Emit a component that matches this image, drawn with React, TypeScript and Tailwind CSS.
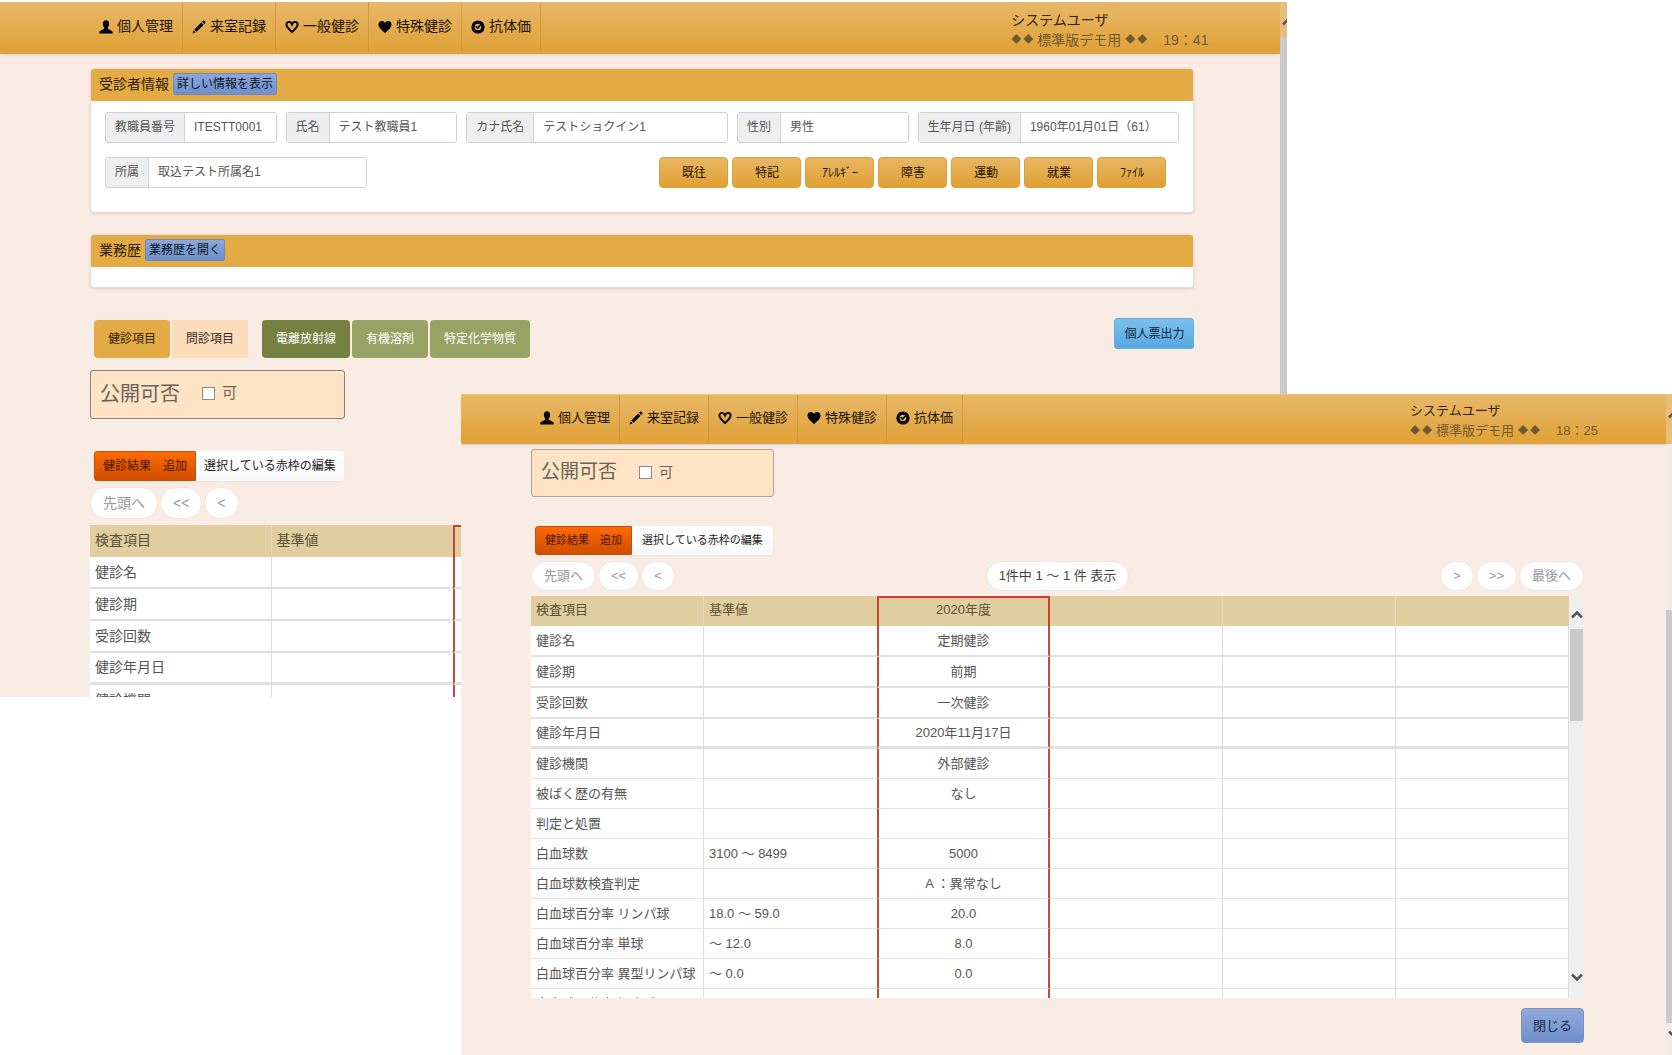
import React from "react";

type Size = "lg" | "md";

const ICONS = {
  user: (
    <path d="M7 .3c2 0 3.100 1.500 3.100 3.500 0 1.500-.5 2.900-1.200 3.700-.3.400-.2 1.300.3 1.600l3.800 1.900c.5.300.7.700.7 1.200v1.300H.3v-1.300c0-.5.2-.9.7-1.200l3.800-1.900c.5-.3.6-1.200.3-1.600C4.400 6.700 3.900 5.300 3.900 3.800 3.900 1.800 5 .3 7 .3z" />
  ),
  pencil: (
    <path d="M11 .8c.4-.4.9-.4 1.300 0l1 1c.4.400.4.900 0 1.300l-1 1-2.300-2.300zM9.300 2.500l2.300 2.300-7 7-2.300-2.300zM1.700 10.200l2.100 2.100L.6 13.400z" />
  ),
  heartEmpty: (
    <path
      d="M7 12C4.500 9.800 1.400 7.300 1.400 4.600 1.400 2.900 2.600 1.900 4 1.900c1.400 0 2.400.9 3 2.500.6-1.600 1.600-2.500 3-2.500 1.400 0 2.600 1 2.600 2.700 0 2.700-3.100 5.200-5.600 7.400z"
      fill="none"
      stroke="currentColor"
      strokeWidth="1.900"
    />
  ),
  heart: (
    <path d="M7 13.200C4 10.500.5 7.800.5 4.600.5 2.400 2 1 3.900 1 5.300 1 6.400 1.800 7 3.200 7.600 1.800 8.700 1 10.100 1 12 1 13.500 2.400 13.500 4.600 13.500 7.800 10 10.500 7 13.200z" />
  ),
  ok: (
    <>
      <circle cx="7" cy="7" r="6.600" />
      <circle cx="7" cy="7" r="3.300" className="fill-[#e4ae4f]" />
      <path d="M4.800 6.300l1.700 1.700L10 4.500" fill="none" stroke="currentColor" strokeWidth="1.600" />
    </>
  ),
};

const NAV: { icon: keyof typeof ICONS; label: string }[] = [
  { icon: "user", label: "個人管理" },
  { icon: "pencil", label: "来室記録" },
  { icon: "heartEmpty", label: "一般健診" },
  { icon: "heart", label: "特殊健診" },
  { icon: "ok", label: "抗体価" },
];

function Diamonds() {
  return (
    <span className="inline-flex gap-0.5 text-[10px]">
      <span>◆</span>
      <span>◆</span>
    </span>
  );
}

function NavBar({ size, time }: { size: Size; time: string }) {
  const lg = size === "lg";
  return (
    <header
      className={`flex shrink-0 items-stretch justify-between border-b border-[#dba548] bg-linear-to-b from-[#e7b867] to-[#e0a033] shadow-sm ${
        lg ? "h-[52px] pr-[72px] pl-[90px] text-[14px]" : "h-[50px] border-t border-t-[#ecc95c] pr-[68px] pl-[70px] text-[13px]"
      }`}
    >
      <nav className="flex">
        {NAV.map((n) => (
          <a
            key={n.label}
            href="#"
            className="flex items-center gap-1 border-r border-[#cf9a3f] px-[9px] pb-0.5 whitespace-nowrap text-[#1c1304]"
          >
            <svg viewBox="0 0 14 14" className="size-3.5 fill-current text-black" aria-hidden="true">
              {ICONS[n.icon]}
            </svg>
            {n.label}
          </a>
        ))}
      </nav>
      <div className="flex flex-col justify-center pt-1 leading-5 whitespace-nowrap">
        <p className="text-[#33240a]">システムユーザ</p>
        <p className="flex gap-4 text-[#6f5a30]">
          <span className="flex items-center gap-1">
            <Diamonds />
            標準版デモ用
            <Diamonds />
          </span>
          <span>{time}</span>
        </p>
      </div>
    </header>
  );
}

function Field({ id, label, value, span }: { id: string; label: string; value: string; span: string }) {
  return (
    <div className={`flex h-[31px] overflow-hidden rounded-[3px] border border-[#cfcfd4] text-[12px] text-[#555] ${span}`}>
      <label htmlFor={id} className="flex shrink-0 items-center border-r border-[#d4d4d4] bg-[#eeeeee] px-[9px] pb-px whitespace-nowrap">
        {label}
      </label>
      <input id={id} readOnly defaultValue={value} className="w-full min-w-0 bg-white px-[9px] pb-px outline-none" />
    </div>
  );
}

function Card({ title, action, children }: { title: string; action: string; children: React.ReactNode }) {
  return (
    <section className="overflow-hidden rounded border border-[#e6dcd6] bg-white shadow-sm">
      <div className="flex h-8 items-center gap-1 bg-[#e4ab45] px-2 pb-0.5 text-[14px] text-[#2d2008]">
        <h2>{title}</h2>
        <button className="h-[22px] rounded-[2px] border border-[#7088b8] bg-linear-to-b from-[#8ba6da] to-[#6e90cd] px-[3px] text-[12px] leading-none text-[#0c1424]">
          {action}
        </button>
      </div>
      {children}
    </section>
  );
}

function PublishBox({ size }: { size: Size }) {
  const lg = size === "lg";
  return (
    <div
      className={`flex items-center gap-[22px] rounded-[3px] border bg-[#fee4c5] pb-0.5 pl-[9px] text-[#6b6157] ${
        lg ? "h-[49px] w-[255px] border-[#8b8078]" : "h-[48px] w-[243px] border-[#b3a296]"
      }`}
    >
      <span className={lg ? "text-[20px]" : "text-[19px]"}>公開可否</span>
      <label className={`flex items-center gap-[7px] ${lg ? "text-[15px]" : "text-[14px]"}`}>
        <input type="checkbox" className="size-[13px] appearance-none border border-[#8a8a8a] bg-white checked:bg-[#6b6157]" />
        可
      </label>
    </div>
  );
}

function EditButtons({ size }: { size: Size }) {
  const lg = size === "lg";
  return (
    <div className={`flex whitespace-nowrap ${lg ? "ml-1 h-[30px] text-[12px]" : "ml-1 h-[29px] text-[11px]"}`}>
      <button
        className={`rounded-l-[3px] border border-[#c4500c] bg-linear-to-b from-[#fd6a03] to-[#cf4d00] text-[#4a1500] ${
          lg ? "px-2" : "px-[9px]"
        }`}
      >
        健診結果　追加
      </button>
      <button
        className={`rounded-r-[3px] bg-linear-to-b from-white to-[#f8f8f8] text-[#222] shadow-xs ${lg ? "px-2" : "px-2.5"}`}
      >
        選択している赤枠の編集
      </button>
    </div>
  );
}

function Pill({ children, size }: { children: React.ReactNode; size: Size }) {
  return (
    <button
      className={`rounded-full border border-[#efe4de] bg-white text-[#999] ${
        size === "lg" ? "h-8 px-3 text-[14px]" : "h-[30px] px-3 text-[13px]"
      }`}
    >
      {children}
    </button>
  );
}

function Pager({ size }: { size: Size }) {
  return (
    <div className="grid grid-cols-[1fr_auto_1fr] items-center whitespace-nowrap">
      <div className="flex gap-0.5">
        <Pill size={size}>先頭へ</Pill>
        <Pill size={size}>&lt;&lt;</Pill>
        <Pill size={size}>&lt;</Pill>
      </div>
      {size === "md" && (
        <p className="flex h-[30px] items-center rounded-full border border-[#efe4de] bg-white px-3 text-[13px] text-[#444]">
          1件中 1 ～ 1 件 表示
        </p>
      )}
      {size === "md" && (
        <div className="flex justify-end gap-0.5">
          <Pill size={size}>&gt;</Pill>
          <Pill size={size}>&gt;&gt;</Pill>
          <Pill size={size}>最後へ</Pill>
        </div>
      )}
    </div>
  );
}

type Row = [string, string, string];

const ITEM_ROWS: Row[] = [
  ["健診名", "", ""],
  ["健診期", "", ""],
  ["受診回数", "", ""],
  ["健診年月日", "", ""],
  ["健診機関", "", ""],
];

const RESULT_ROWS: Row[] = [
  ["健診名", "", "定期健診"],
  ["健診期", "", "前期"],
  ["受診回数", "", "一次健診"],
  ["健診年月日", "", "2020年11月17日"],
  ["健診機関", "", "外部健診"],
  ["被ばく歴の有無", "", "なし"],
  ["判定と処置", "", ""],
  ["白血球数", "3100 ～ 8499", "5000"],
  ["白血球数検査判定", "", "A ：異常なし"],
  ["白血球百分率 リンパ球", "18.0 ～ 59.0", "20.0"],
  ["白血球百分率 単球", "～ 12.0", "8.0"],
  ["白血球百分率 異型リンパ球", "～ 0.0", "0.0"],
  ["白血球百分率 好中球", "41.0 ～ 78.0", ""],
];

function rowBorder(i: number) {
  if (i === 3) return "border-b-[3px] border-b-[#e0e0e0]";
  if (i < 3) return "border-b-2 border-b-[#e0e0e0]";
  return "border-b border-b-[#e4e4e4]";
}

function ResultTable({ size, rows, year }: { size: Size; rows: Row[]; year?: string }) {
  const lg = size === "lg";
  return (
    <table
      className={`w-full table-fixed border-separate border-spacing-0 text-left whitespace-nowrap text-[#555] ${
        lg ? "text-[14px]" : "text-[13px]"
      }`}
    >
      <thead>
        <tr className={`bg-[#e0cda0] text-[#5d5238] ${lg ? "h-8" : "h-[30px]"}`}>
          <th className="border-r border-[#ead9b8] p-0 pb-0.5 pl-[5px] font-normal">検査項目</th>
          <th className="p-0 pb-0.5 pl-[5px] font-normal">基準値</th>
          <th className="border-x-2 border-t-2 border-[#c8402f] p-0 pb-1 text-center font-normal">{year}</th>
          <th className="border-r border-[#ead9b8] p-0" />
          <th className="border-r border-[#ead9b8] p-0" />
          <th className="p-0" />
        </tr>
      </thead>
      <tbody className="bg-white">
        {rows.map(([name, base, value], i) => {
          const b = rowBorder(i);
          const cell = `border-r border-r-[#dedede] p-0 ${b}`;
          return (
            <tr key={name} className={lg ? "h-8" : i < 3 ? "h-[31px]" : "h-[30px]"}>
              <td className={`border-r border-r-[#dedede] py-0 pl-[5px] ${b}`}>{name}</td>
              <td className={`py-0 pl-[5px] ${b}`}>{base}</td>
              <td className={`border-x-2 border-x-[#c04a40] p-0 text-center ${b}`}>{value}</td>
              <td className={cell} />
              <td className={cell} />
              <td className={cell} />
            </tr>
          );
        })}
      </tbody>
    </table>
  );
}

function Chevron({ down }: { down?: boolean }) {
  return (
    <svg viewBox="0 0 12 8" className="h-2 w-3 shrink-0" fill="none" stroke="#555" strokeWidth="2.500" aria-hidden="true">
      <path d={down ? "M1 1.500l5 5 5-5" : "M1 6.500l5-5 5 5"} />
    </svg>
  );
}

const CATEGORY_BUTTONS = ["既往", "特記", "ｱﾚﾙｷﾞｰ", "障害", "運動", "就業", "ﾌｧｲﾙ"];

function PatientWindow() {
  return (
    <div className="absolute top-0.5 left-0 flex h-[695px] w-[77%] overflow-hidden bg-[#f9ece4]">
      <div className="flex min-w-0 flex-1 flex-col">
        <NavBar size="lg" time="19：41" />
        <main className="flex flex-col pt-3.5 pr-[86px] pl-[90px]">
          <Card title="受診者情報" action="詳しい情報を表示">
            <div className="flex flex-col gap-3.5 px-3.5 pt-[11px] pb-6">
              <div className="grid grid-cols-12 gap-x-[9px]">
                <Field id="staff-no" label="教職員番号" value="ITESTT0001" span="col-span-2" />
                <Field id="name" label="氏名" value="テスト教職員1" span="col-span-2" />
                <Field id="kana" label="カナ氏名" value="テストショクイン1" span="col-span-3" />
                <Field id="sex" label="性別" value="男性" span="col-span-2" />
                <Field id="birth" label="生年月日 (年齢)" value="1960年01月01日（61）" span="col-span-3" />
              </div>
              <div className="grid grid-cols-12 gap-x-[9px]">
                <Field id="dept" label="所属" value="取込テスト所属名1" span="col-span-3" />
                <div className="col-span-9 flex justify-end gap-1 pr-[13px]">
                  {CATEGORY_BUTTONS.map((b) => (
                    <button
                      key={b}
                      className="w-[69px] rounded border border-[#d99f3c] bg-linear-to-b from-[#e8b662] to-[#e0a132] text-[12px] text-[#1c1304]"
                    >
                      {b}
                    </button>
                  ))}
                </div>
              </div>
            </div>
          </Card>
          <div className="mt-[21px]">
            <Card title="業務歴" action="業務歴を開く">
              <div className="h-5" />
            </Card>
          </div>
          <div className="mt-[30px] flex items-start justify-between text-[12px]">
            <div className="mt-0.5 ml-1 flex h-[38px] gap-0.5">
              <button className="rounded bg-[#e4ab45] px-3.5 text-[#33240a]">健診項目</button>
              <button className="bg-[#fddcbb] px-3.5 text-[#3a3028]">問診項目</button>
              <button className="ml-3 rounded bg-[#758040] px-3.5 text-white">電離放射線</button>
              <button className="rounded bg-[#98a265] px-3.5 text-white">有機溶剤</button>
              <button className="rounded bg-[#98a265] px-3.5 text-white">特定化学物質</button>
            </div>
            <button className="h-[31px] rounded-[3px] border border-[#62acd9] bg-linear-to-b from-[#7cc0ea] to-[#57a8e4] px-[9px] text-[#0c2438]">
              個人票出力
            </button>
          </div>
          <div className="mt-3">
            <PublishBox size="lg" />
          </div>
          <div className="mt-8">
            <EditButtons size="lg" />
          </div>
          <div className="mt-1.5">
            <Pager size="lg" />
          </div>
          <div className="mt-1.5 pr-[15px]">
            <ResultTable size="lg" rows={ITEM_ROWS} />
          </div>
        </main>
      </div>
      <div className="flex w-[7px] shrink-0 flex-col overflow-hidden bg-[#cacaca]">
        <div className="flex h-[35px] items-center bg-[#e6bd79] pt-1 pl-0.5">
          <Chevron />
        </div>
      </div>
    </div>
  );
}

function ResultWindow() {
  return (
    <div className="absolute top-[394px] right-0 bottom-0 left-[461px] flex overflow-hidden bg-[#f9ece4]">
      <div className="flex min-w-0 flex-1 flex-col">
        <NavBar size="md" time="18：25" />
        <main className="flex min-h-0 flex-1 flex-col pt-[5px] pr-[82px] pb-3 pl-[70px]">
          <PublishBox size="md" />
          <div className="mt-[29px]">
            <EditButtons size="md" />
          </div>
          <div className="mt-1.5">
            <Pager size="md" />
          </div>
          <div className="mt-[5px] flex min-h-0 flex-1 overflow-hidden">
            <div className="min-w-0 flex-1">
              <ResultTable size="md" rows={RESULT_ROWS} year="2020年度" />
            </div>
            <div className="flex w-[15px] shrink-0 flex-col items-center bg-[#efefef] pt-[15px] pb-[17px]">
              <Chevron />
              <div className="mt-2.5 mb-auto h-[92px] w-[13px] bg-[#cacaca]" />
              <Chevron down />
            </div>
          </div>
          <button className="mt-2.5 h-[35px] self-end rounded border border-[#7c92bd] bg-linear-to-b from-[#91a8da] to-[#6e8fcb] px-[11px] text-[13px] text-[#1c2a48]">
            閉じる
          </button>
        </main>
      </div>
      <div className="flex w-1.5 shrink-0 flex-col overflow-hidden bg-[#f0ebe8]">
        <div className="flex h-[50px] shrink-0 items-center bg-[#e6bd79] pb-2 pl-0.5">
          <Chevron />
        </div>
        <div className="mt-[166px] flex-1 bg-[#cacaca]" />
        <div className="flex h-8 shrink-0 items-center pb-2.5 pl-0.5">
          <Chevron down />
        </div>
      </div>
    </div>
  );
}

export default function App() {
  return (
    <div className='relative h-screen min-h-[900px] overflow-hidden bg-white font-["Liberation_Sans","Noto_Sans_CJK_JP",sans-serif]'>
      <PatientWindow />
      <ResultWindow />
    </div>
  );
}
